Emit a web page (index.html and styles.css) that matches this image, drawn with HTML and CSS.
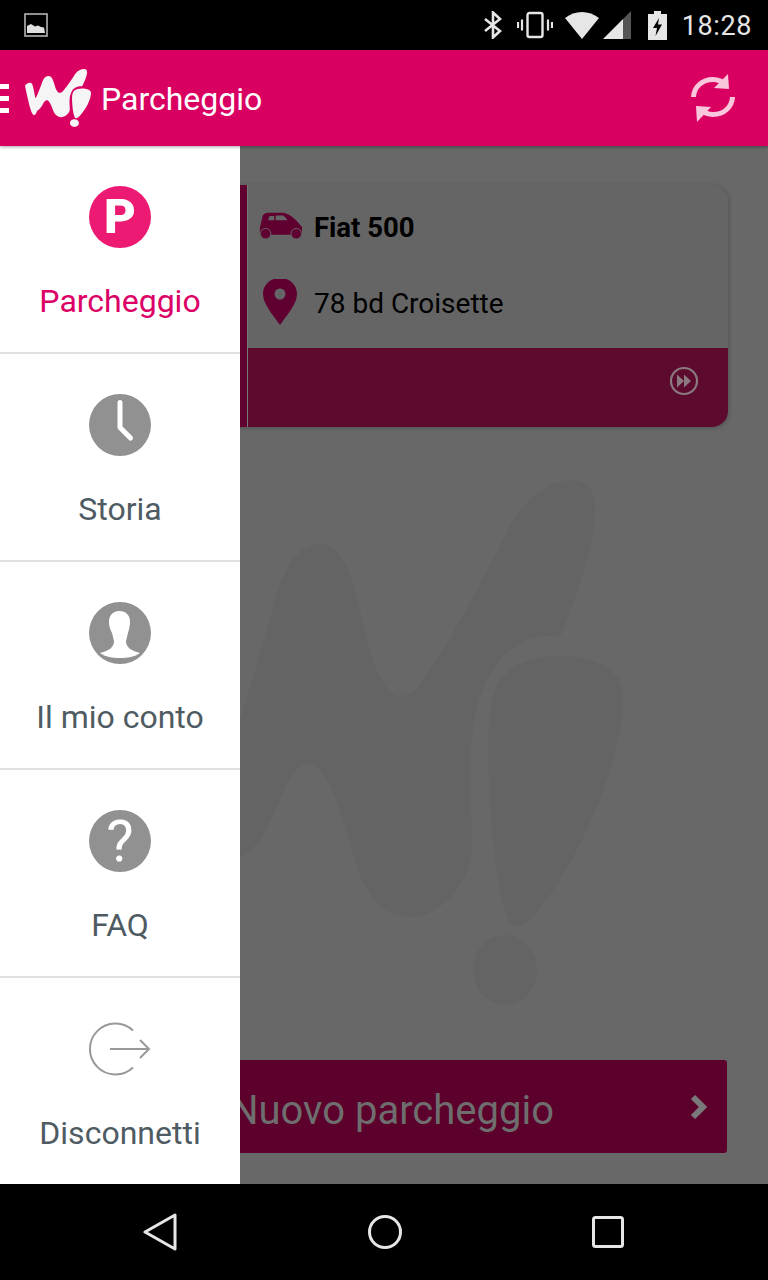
FILE: index.html
```html
<!DOCTYPE html>
<html>
<head>
  <meta charset="utf-8">
  <title>Parcheggio</title>
  <link rel="stylesheet" href="styles.css">
</head>
<body>
  <svg class="defs" width="0" height="0">
    <symbol id="wi-logo" viewBox="153 480 470 526" preserveAspectRatio="none">
      <path d="M153 634C158 615 180 600 197 607C212 615 218 700 228 745C245 720 270 610 283 578C293 555 305 544 320 544C335 544 345 560 350 575C362 610 366 645 375 665C385 690 392 696 400 696C412 696 420 685 430 670C460 625 490 565 513 521C530 495 550 480 572 480C590 480 597 495 595 515C592 555 575 600 560 637C525 630 495 655 483 690C470 720 470 760 470 790C470 820 478 850 465 875C450 905 430 917 410 917C385 917 372 900 362 880C350 850 340 800 327 781C320 768 314 763 308 763C298 763 290 775 280 800C268 830 255 850 240 858C233 880 225 905 212 895C190 870 165 700 153 634Z"/>
      <path d="M560 656C585 656 623 665 623 696C623 730 613 764 600 800C583 840 565 875 547 899C535 915 525 926 517 926C508 926 503 910 499 885C493 853 488 790 488 746C488 715 493 685 505 675C518 662 535 656 560 656Z"/>
      <ellipse cx="505" cy="970" rx="32" ry="35"/>
    </symbol>
  </svg>

  <div class="phone">
    <div class="status-bar">
      <svg class="st-image" width="24" height="24" viewBox="0 0 24 24">
        <rect x="1" y="1" width="22" height="22" fill="none" stroke="#b4b4b4" stroke-width="1.6"/>
        <path d="M3 20V13L7 11L11 13.500L14 12.500L17 14L20 14.500L21 20Z" fill="#e0e0e0"/>
      </svg>
      <div class="st-right">
        <svg width="18" height="28" viewBox="0 0 18 28">
          <path d="M1 8L16 20L9 26.500V1.500L16 8L1 20" fill="none" stroke="#e6e6e6" stroke-width="2.600"/>
        </svg>
        <svg class="st-vibrate" width="36" height="28" viewBox="0 0 36 28">
          <rect x="10.500" y="2" width="15" height="24" rx="2" fill="none" stroke="#e6e6e6" stroke-width="2.400"/>
          <path d="M5 8.500V19.500M1 11V17M31 8.500V19.500M35 11V17" stroke="#e6e6e6" stroke-width="2.200"/>
        </svg>
        <svg class="st-wifi" width="34" height="28" viewBox="0 0 34 28">
          <path d="M0 7C5 3 11 1 17 1C23 1 29 3 34 7L17 28Z" fill="#e6e6e6"/>
        </svg>
        <svg class="st-signal" width="28" height="28" viewBox="0 0 28 28">
          <path d="M28 0V28H20V8Z" fill="#555"/>
          <path d="M20 8V28H0Z" fill="#e6e6e6"/>
        </svg>
        <svg class="st-battery" width="19" height="29" viewBox="0 0 19 29">
          <path d="M6 0H13V3H19V29H0V3H6Z" fill="#e6e6e6"/>
          <path d="M11 7L5 17H9L7.500 25L14 13.500H10Z" fill="#000"/>
        </svg>
        <span class="st-time">18:28</span>
      </div>
    </div>

    <div class="app-bar">
      <div class="burger"><span></span><span></span><span></span></div>
      <svg class="logo" width="66" height="58"><use href="#wi-logo"/></svg>
      <span class="app-title">Parcheggio</span>
      <svg class="refresh" width="46" height="50" viewBox="0 0 46 50">
        <path d="M3.500 24C4 14 12 6.500 23 6.500C29 6.500 33 9 36 12" fill="none" stroke="#f9c6dc" stroke-width="5"/>
        <path d="M38 1L39 16L24 15Z" fill="#f9c6dc"/>
        <path d="M42.500 24C42 34 34 41.500 23 41.500C17 41.500 13 39 10 36" fill="none" stroke="#f9c6dc" stroke-width="5"/>
        <path d="M7 49L6 33L21 34Z" fill="#f9c6dc"/>
      </svg>
    </div>

    <div class="main">
      <svg class="watermark" width="470" height="526"><use href="#wi-logo"/></svg>

      <div class="card">
        <div class="card-accent"></div>
        <div class="card-body">
          <div class="card-info">
            <div class="card-row">
              <svg class="card-icon" width="46" height="30" viewBox="0 0 48 30">
                <path d="M3 16L6 3C8 0 11 0 13 0H28C36 2 42 9 47 15V23H3Z" fill="#5f0030"/>
                <path d="M13 3.500H18V8H11.500ZM19.500 3H27C29 4.500 31 6 32 8H19.500Z" fill="#666"/>
                <circle cx="9" cy="22" r="5.500" fill="#5f0030" stroke="#666" stroke-width="1"/>
                <circle cx="41" cy="22" r="5.500" fill="#5f0030" stroke="#666" stroke-width="1"/>
              </svg>
              <strong class="car-name">Fiat 500</strong>
            </div>
            <div class="card-row">
              <svg class="card-icon" width="46" height="48" viewBox="0 2 46 48">
                <path fill-rule="evenodd" d="M23 1C33 1 40 8 40 17C40 27 30 38 23 48C16 38 6 27 6 17C6 8 13 1 23 1ZM23 11.500A5.500 5.500 0 1 0 23 22.500A5.500 5.500 0 1 0 23 11.500Z" fill="#5f0030"/>
              </svg>
              <span class="car-place">78 bd Croisette</span>
            </div>
          </div>
          <div class="card-foot">
            <svg width="30" height="30" viewBox="0 0 30 30">
              <circle cx="15" cy="15" r="13" fill="none" stroke="#8a7a80" stroke-width="2.200"/>
              <path d="M8 8.500L15 15L8 21.500ZM15 8.500L22 15L15 21.500Z" fill="#8a7a80"/>
            </svg>
          </div>
        </div>
      </div>

      <div class="new-btn">
        <span>Nuovo parcheggio</span>
        <svg class="new-chevron" width="20" height="26" viewBox="0 0 20 26">
          <path d="M4 3L14 13L4 23" fill="none" stroke="#7a7a7a" stroke-width="6"/>
        </svg>
      </div>

      <div class="drawer">
        <div class="drawer-item active">
          <div class="round pink"><span class="round-p">P</span></div>
          <span class="drawer-label">Parcheggio</span>
        </div>
        <div class="drawer-item">
          <div class="round">
            <svg width="62" height="62" viewBox="0 0 62 62">
              <path d="M31 8.500V33.500L41.500 44" fill="none" stroke="#fff" stroke-width="5" stroke-linecap="round" stroke-linejoin="round"/>
            </svg>
          </div>
          <span class="drawer-label">Storia</span>
        </div>
        <div class="drawer-item">
          <div class="round">
            <svg width="62" height="62" viewBox="0 0 62 62">
              <path d="M30.500 9C37 9 41 13 41 20C41 24 40 27 39 31L37 39C37 43 39 45 41 47C44 49 48 50 51 51C46 55 38 56 31 56C24 56 16 55 11 51C14 50 18 49 21 47C23 45 25 43 25 39L23 31C21 27 20 24 20 20C20 13 24 9 30.500 9Z" fill="#fff"/>
            </svg>
          </div>
          <span class="drawer-label">Il mio conto</span>
        </div>
        <div class="drawer-item">
          <div class="round"><span class="round-q">?</span></div>
          <span class="drawer-label">FAQ</span>
        </div>
        <div class="drawer-item">
          <svg class="logout" width="62" height="62" viewBox="0 0 62 62">
            <path d="M44 12.500A25.500 25.500 0 1 0 44 49.500" fill="none" stroke="#999" stroke-width="2"/>
            <path d="M21 31H60M51 22L60 31L51 40" fill="none" stroke="#999" stroke-width="2"/>
          </svg>
          <span class="drawer-label">Disconnetti</span>
        </div>
      </div>
    </div>

    <div class="nav-bar">
      <svg width="34" height="38" viewBox="0 0 34 38">
        <path d="M32 2V36L2 19Z" fill="none" stroke="#e6e6e6" stroke-width="3" stroke-linejoin="round"/>
      </svg>
      <svg width="34" height="34" viewBox="0 0 34 34">
        <circle cx="17" cy="17" r="15.500" fill="none" stroke="#e6e6e6" stroke-width="3"/>
      </svg>
      <svg width="32" height="32" viewBox="0 0 32 32">
        <rect x="1.500" y="1.500" width="29" height="29" rx="2" fill="none" stroke="#e6e6e6" stroke-width="3"/>
      </svg>
    </div>
  </div>
</body>
</html>
```

FILE: styles.css
```css
* {
  margin: 0;
  padding: 0;
  box-sizing: border-box;
  font-family: 'Roboto', 'Liberation Sans', sans-serif;
}

body {
  width: 768px;
  height: 1280px;
  overflow: hidden;
  background: #000;
}

svg {
  display: block;
  flex-shrink: 0;
}

.defs {
  position: absolute;
}

.phone {
  width: 768px;
  height: 1280px;
  display: flex;
  flex-direction: column;
}

/* Status bar */
.status-bar {
  height: 50px;
  padding: 0 16px 0 24px;
  background: #000;
  display: flex;
  align-items: center;
  justify-content: space-between;
}

.st-right {
  display: flex;
  align-items: center;
}

.st-vibrate { margin-left: 15px; }
.st-wifi { margin-left: 12px; }
.st-signal { margin-left: 4px; }
.st-battery { margin-left: 17px; }

.st-time {
  margin-left: 15px;
  padding-top: 2px;
  color: #e6e6e6;
  font-size: 27px;
  letter-spacing: 0.6px;
}

/* App bar */
.app-bar {
  height: 96px;
  background: #d90062;
  display: flex;
  align-items: center;
  position: relative;
  z-index: 3;
  box-shadow: 0 1px 3px rgba(0, 0, 0, 0.35);
}

.burger {
  width: 9px;
  display: flex;
  flex-direction: column;
  gap: 7px;
}

.burger span {
  display: block;
  height: 5px;
  background: #fff;
}

.logo {
  margin-left: 16px;
  fill: #f5f5f5;
}

.app-title {
  margin-left: 10px;
  padding-top: 2px;
  color: #fff;
  font-size: 32px;
}

.refresh {
  margin-left: auto;
  margin-right: 32px;
}

/* Dimmed page behind the drawer */
.main {
  flex: 1;
  min-height: 0;
  position: relative;
  overflow: hidden;
  background: #686868;
  padding: 39px 40px 31px;
  display: flex;
  flex-direction: column;
  justify-content: space-between;
}

.watermark {
  position: absolute;
  top: 334px;
  left: 153px;
  fill: #646464;
}

.card {
  height: 242px;
  position: relative;
  display: flex;
  border-radius: 0 16px 16px 0;
  background: #656565;
  box-shadow: 1px 1px 4px rgba(0, 0, 0, 0.2);
}

.card-accent {
  width: 208px;
  background: #5f0030;
  border-right: 1px solid #787878;
}

.card-body {
  flex: 1;
  display: flex;
  flex-direction: column;
}

.card-info {
  flex: 1;
  padding: 18px 0 0 9px;
  display: flex;
  flex-direction: column;
  gap: 28px;
}

.card-row {
  height: 48px;
  display: flex;
  align-items: center;
  gap: 11px;
}

.car-name {
  color: #000;
  font-size: 27.5px;
  font-weight: 700;
}

.car-place {
  color: #000;
  font-size: 28px;
}

.card-foot {
  height: 79px;
  padding: 18px 29px 0 0;
  background: #5c0a2e;
  border-radius: 0 0 16px 0;
  display: flex;
  justify-content: flex-end;
  align-items: flex-start;
}

.new-btn {
  height: 93px;
  margin-right: 1px;
  padding: 8px 0 0 17px;
  position: relative;
  background: #5c002c;
  border-radius: 3px;
  display: flex;
  align-items: center;
  justify-content: center;
  color: #6e6e6e;
  font-size: 40px;
  z-index: 1;
}

.new-chevron {
  position: absolute;
  right: 18px;
  top: 34px;
}

/* Drawer */
.drawer {
  position: absolute;
  top: 0;
  left: 0;
  bottom: 0;
  width: 240px;
  background: #fff;
  display: flex;
  flex-direction: column;
  z-index: 2;
}

.drawer-item {
  height: 208px;
  padding-top: 40px;
  border-bottom: 2px solid #e0e0e0;
  display: flex;
  flex-direction: column;
  align-items: center;
}

.drawer-item:last-child {
  height: 206px;
  border-bottom: none;
}

.round {
  width: 62px;
  height: 62px;
  border-radius: 50%;
  background: #919191;
  color: #fff;
  display: flex;
  align-items: center;
  justify-content: center;
}

.round.pink {
  background: #ec1a73;
}

.round-p {
  font-size: 49px;
  font-weight: 900;
  line-height: 62px;
}

.round-q {
  font-size: 58px;
  font-weight: 400;
  line-height: 62px;
}

.logout {
  overflow: visible;
}

.drawer-label {
  margin-top: 33px;
  color: #4f5b62;
  font-size: 32px;
  line-height: 40px;
  white-space: nowrap;
}

.drawer-item.active .drawer-label {
  color: #dc0066;
}

/* Navigation bar */
.nav-bar {
  height: 96px;
  padding: 0 144px 0 143px;
  background: #000;
  display: flex;
  align-items: center;
  justify-content: space-between;
}
```
